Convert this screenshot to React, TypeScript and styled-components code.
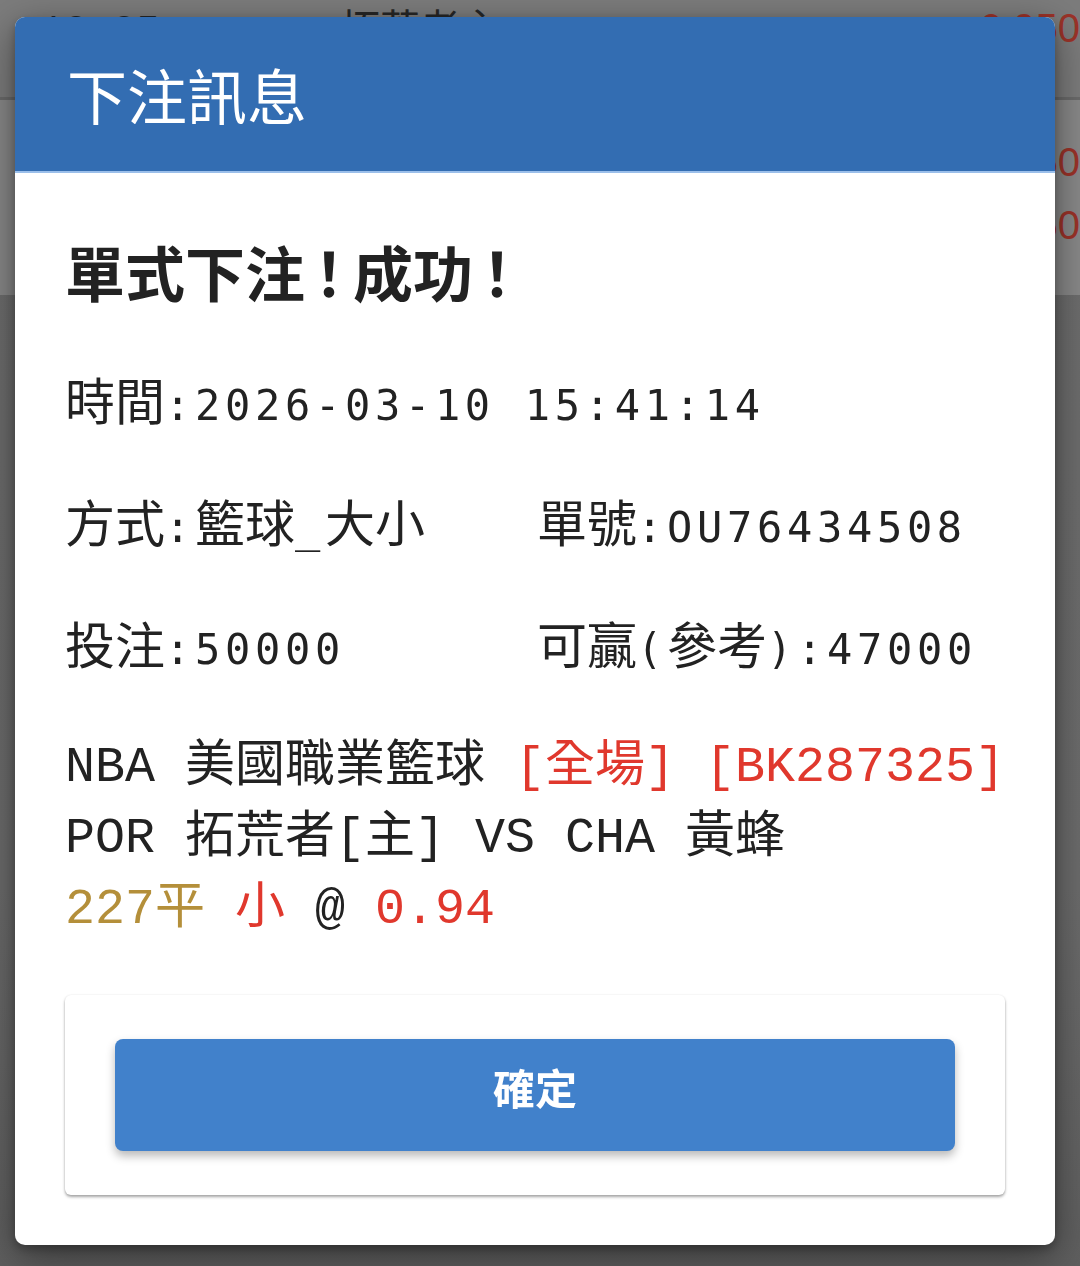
import React from "react";
import styled, { createGlobalStyle } from "styled-components";

const GlobalStyle = createGlobalStyle`
  html, body { margin: 0; padding: 0; }
  body {
    width: 1080px;
    height: 1266px;
    overflow: hidden;
    background: #6c6c6c;
    font-family: "Noto Sans CJK TC", "Noto Sans", sans-serif;
  }
`;

const CJK = "'Noto Sans CJK TC', 'Noto Sans CJK SC', sans-serif";
const COURIER = "'Courier New', 'Nimbus Mono PS', 'Nimbus Mono L', 'FreeMono', 'Liberation Mono'";

/* ---------- dimmed page behind the dialog ---------- */
const Page = styled.div`
  display: flex;
  flex-direction: column;
  width: 1080px;
  height: 1266px;
  background: linear-gradient(#6e6e6e 0%, #6c6c6c 70%, #5f5f5f 100%);
`;

const TopBar = styled.div`
  height: 100px;
  background: #7c7c7c;
  border-bottom: 3px solid #6b6b6b;
  display: flex;
  align-items: flex-start;
  padding: 10px 0 0 40px;
  box-sizing: border-box;
  font-family: "Liberation Mono", ${CJK};
  font-size: 40px;
  line-height: 46px;
  color: #262626;
`;

const BgCell = styled.span<{ $w?: number; $red?: boolean }>`
  ${(p) => (p.$w ? `width: ${p.$w}px;` : "flex: 1; text-align: right; margin-top: -5px;")}
  color: ${(p) => (p.$red ? "#9c3329" : "#262626")};
  font-family: ${(p) => (p.$red ? "'Liberation Sans', sans-serif" : "inherit")};
  white-space: nowrap;
`;

const BgRows = styled.div`
  height: 195px;
  background: #898989;
  display: flex;
  flex-direction: column;
  padding-top: 31px;
  box-sizing: border-box;
`;

const BgRow = styled.div`
  height: 63px;
  display: flex;
  justify-content: flex-end;
  align-items: center;
  font-family: "Liberation Sans", sans-serif;
  font-size: 40px;
  color: #9c3329;
  white-space: nowrap;
`;

/* ---------- dialog ---------- */
const Overlay = styled.div`
  position: fixed;
  inset: 0;
  display: flex;
  align-items: flex-start;
  padding: 17px 25px 0 15px;
`;

const Dialog = styled.div`
  flex: 1;
  background: #ffffff;
  border-radius: 10px;
  overflow: hidden;
  box-shadow: 0 12px 40px rgba(0, 0, 0, 0.45), 0 4px 10px rgba(0, 0, 0, 0.25);
`;

const Header = styled.div`
  height: 156px;
  box-sizing: border-box;
  background: #336db2;
  border-bottom: 2px solid #9bbfea;
  display: flex;
  align-items: center;
  padding-left: 52px;
`;

const HeaderTitle = styled.h1`
  margin: 0;
  font-family: ${CJK};
  font-weight: 400;
  font-size: 60px;
  line-height: 1;
  color: #ffffff;
`;

const Body = styled.div`
  padding: 58px 50px 50px 50px;
  display: flex;
  flex-direction: column;
`;

const Result = styled.h2`
  margin: 0;
  font-family: ${CJK};
  font-weight: 700;
  font-size: 60px;
  line-height: 80px;
  color: #222222;
`;

const Bang = styled.span`
  font-feature-settings: "halt";
  margin: 0 9px;
`;

const InfoGrid = styled.div`
  margin-top: 30px;
  display: grid;
  grid-template-columns: 472px 1fr;
  grid-auto-rows: 122px;
  align-items: center;
`;

const Field = styled.div<{ $span?: boolean }>`
  ${(p) => (p.$span ? "grid-column: 1 / -1;" : "")}
  font-family: ${CJK};
  font-size: 50px;
  line-height: 60px;
  color: #222222;
  white-space: nowrap;
`;

const Latin = styled.span`
  font-family: "DejaVu Sans Mono", monospace;
  font-size: 42px;
  letter-spacing: 4.7px;
`;

const Match = styled.div`
  margin-top: 25px;
  display: flex;
  flex-direction: column;
  font-family: ${COURIER}, ${CJK};
  font-size: 50px;
  line-height: 71px;
  color: #222222;
`;

const MatchLine = styled.div`
  white-space: pre;
`;

const Tone = styled.span<{ $tone: "red" | "gold" | "dark" }>`
  color: ${(p) => (p.$tone === "red" ? "#e0382d" : p.$tone === "gold" ? "#b48f3a" : "#222222")};
`;

const ActionCard = styled.div`
  margin-top: 50px;
  background: #ffffff;
  border-radius: 6px;
  padding: 44px 50px;
  box-shadow: 0 2px 3px rgba(0, 0, 0, 0.35), 0 0 2px rgba(0, 0, 0, 0.08);
`;

const ConfirmButton = styled.button`
  display: block;
  width: 100%;
  height: 112px;
  padding: 0 0 18px 0;
  border: none;
  border-radius: 8px;
  background: #4181cb;
  color: #ffffff;
  font-family: ${CJK};
  font-weight: 700;
  font-size: 42px;
  box-shadow: 0 5px 10px rgba(0, 0, 0, 0.28);
  cursor: pointer;
`;

const cjkRe = /[\u2e80-\u9fff\uf900-\ufaff\uff00-\uffef]/;

function Mixed({ text }: { text: string }) {
  const runs: { cjk: boolean; s: string }[] = [];
  for (const ch of text) {
    const c = cjkRe.test(ch);
    const last = runs[runs.length - 1];
    if (last && last.cjk === c) last.s += ch;
    else runs.push({ cjk: c, s: ch });
  }
  return (
    <>
      {runs.map((r, i) => (r.cjk ? <span key={i}>{r.s}</span> : <Latin key={i}>{r.s}</Latin>))}
    </>
  );
}

const fields: { text: string; span?: boolean }[] = [
  { text: "時間:2026-03-10 15:41:14", span: true },
  { text: "方式:籃球_大小" },
  { text: "單號:OU76434508" },
  { text: "投注:50000" },
  { text: "可贏(參考):47000" },
];

export default function App() {
  return (
    <>
      <GlobalStyle />
      <Page>
        <TopBar>
          <BgCell $w={300}>10:05</BgCell>
          <BgCell $w={400}>拓荒者主</BgCell>
          <BgCell $red>0.950</BgCell>
        </TopBar>
        <BgRows>
          <BgRow>0.950</BgRow>
          <BgRow>0.950</BgRow>
        </BgRows>
      </Page>
      <Overlay>
        <Dialog>
          <Header>
            <HeaderTitle>下注訊息</HeaderTitle>
          </Header>
          <Body>
            <Result>
              單式下注<Bang>！</Bang>成功<Bang>！</Bang>
            </Result>
            <InfoGrid>
              {fields.map((f) => (
                <Field key={f.text} $span={f.span}>
                  <Mixed text={f.text} />
                </Field>
              ))}
            </InfoGrid>
            <Match>
              <MatchLine>
                NBA 美國職業籃球 <Tone $tone="red">[全場]</Tone> <Tone $tone="red">[BK287325]</Tone>
              </MatchLine>
              <MatchLine>POR 拓荒者[主] VS CHA 黃蜂</MatchLine>
              <MatchLine>
                <Tone $tone="gold">227平</Tone> <Tone $tone="red">小</Tone> @ <Tone $tone="red">0.94</Tone>
              </MatchLine>
            </Match>
            <ActionCard>
              <ConfirmButton type="button">確定</ConfirmButton>
            </ActionCard>
          </Body>
        </Dialog>
      </Overlay>
    </>
  );
}
